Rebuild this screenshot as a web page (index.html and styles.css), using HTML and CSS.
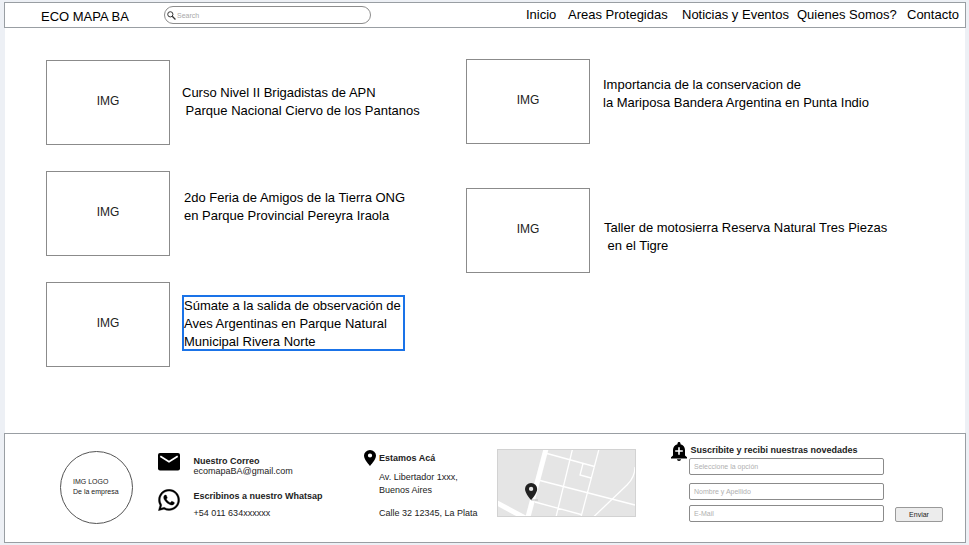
FILE: index.html
```html
<!DOCTYPE html>
<html lang="es">
<head>
<meta charset="utf-8">
<title>Eco Mapa BA</title>
<link rel="stylesheet" href="styles.css">
</head>
<body>
<div class="page">
  <header class="topbar">
    <div class="brand">ECO MAPA BA</div>
    <div class="search">
      <svg width="9" height="9" viewBox="0 0 10 10"><circle cx="3.7" cy="3.7" r="2.9" fill="none" stroke="#333" stroke-width="1.1"/><path d="M5.8 5.8 9.400 9.400" stroke="#333" stroke-width="1.4"/></svg>
      <span>Search</span>
    </div>
    <nav class="nav">
      <a>Inicio</a><a>Areas Protegidas</a><a>Noticias y Eventos</a><a>Quienes Somos?</a><a>Contacto</a>
    </nav>
  </header>

  <main class="news">
    <section class="column">
      <article class="card"><div class="thumb">IMG</div><p class="title t1">Curso Nivel II Brigadistas de APN<br>&nbsp;Parque Nacional Ciervo de los Pantanos</p></article>
      <article class="card"><div class="thumb">IMG</div><p class="title t2">2do Feria de Amigos de la Tierra ONG<br>en Parque Provincial Pereyra Iraola</p></article>
      <article class="card"><div class="thumb">IMG</div><p class="title selected">Súmate a la salida de observación de<br>Aves Argentinas en Parque Natural<br>Municipal Rivera Norte</p></article>
    </section>
    <section class="column right">
      <article class="card"><div class="thumb">IMG</div><p class="title t4">Importancia de la conservacion de<br>la Mariposa Bandera Argentina en Punta Indio</p></article>
      <article class="card"><div class="thumb">IMG</div><p class="title t5">Taller de motosierra Reserva Natural Tres Piezas<br>&nbsp;en el Tigre</p></article>
    </section>
  </main>

  <footer class="footer">
    <div class="logo"><span>IMG LOGO<br>De la empresa</span></div>
    <div class="contact">
      <svg class="mail" width="22" height="18" viewBox="0 0 22 18"><rect width="22" height="17.5" rx="2" fill="#000"/><path d="M2.3 3.2 11 8.7l8.700-5.500" fill="none" stroke="#fff" stroke-width="1.800"/></svg>
      <div class="mail-text"><b>Nuestro Correo</b><br>ecomapaBA@gmail.com</div>
      <svg class="wa" width="22" height="22" viewBox="1.700 1.700 20.600 20.600"><path d="M19.050 4.910A9.820 9.820 0 0 0 12.040 2C6.580 2 2.130 6.450 2.130 11.910c0 1.750.460 3.450 1.320 4.950L2.050 22l5.250-1.380c1.450.790 3.080 1.210 4.740 1.210 5.460 0 9.910-4.450 9.910-9.910 0-2.650-1.030-5.140-2.900-7.010zm-7.010 15.240c-1.480 0-2.930-.400-4.200-1.150l-.300-.180-3.120.820.830-3.040-.200-.310a8.260 8.260 0 0 1-1.260-4.380c0-4.540 3.700-8.240 8.240-8.240 4.540 0 8.230 3.700 8.230 8.240 0 4.540-3.680 8.240-8.220 8.240zm4.520-6.160c-.250-.120-1.470-.720-1.690-.810-.230-.080-.390-.120-.560.120-.170.250-.640.810-.780.970-.140.170-.290.190-.540.060-.250-.120-1.050-.390-1.990-1.230-.740-.660-1.230-1.470-1.380-1.720-.140-.250-.020-.380.110-.510.110-.110.250-.290.370-.430s.170-.250.250-.410c.080-.170.040-.310-.020-.430s-.560-1.340-.760-1.840c-.200-.480-.410-.420-.560-.430h-.480c-.170 0-.430.060-.660.310-.220.250-.860.850-.860 2.070 0 1.220.890 2.400 1.010 2.560.120.170 1.750 2.670 4.230 3.740 2.480 1.070 2.480.710 2.930.670.450-.040 1.470-.600 1.670-1.180.210-.580.210-1.070.140-1.180s-.220-.160-.470-.280z" fill="#000" stroke="#000" stroke-width=".3"/></svg>
      <div class="wa-text"><b>Escribinos a nuestro Whatsap</b><br>+54 011 634xxxxxx</div>
    </div>
    <div class="place">
      <svg width="12" height="16" viewBox="0 0 14 20" preserveAspectRatio="none"><path d="M7 0a7 7 0 0 0-7 7c0 5.250 7 13 7 13s7-7.750 7-13a7 7 0 0 0-7-7zm0 9.500a2.500 2.500 0 1 1 0-5 2.500 2.500 0 0 1 0 5z"/></svg>
      <div class="address"><b>Estamos Acá</b><p>Av. Libertador 1xxx,<br>Buenos Aires</p><p class="second">Calle 32 12345, La Plata</p></div>
    </div>
    <svg class="map" width="139" height="68" viewBox="0 0 139 68">
      <rect width="139" height="68" fill="#e5e5e5"/>
      <g fill="none" stroke="#fff" stroke-width="1.300"><path d="M50 4.500 97.500 17.500M43 31.500 138 56M38 53 84 65.500M75.500 0 59 68M102 0 84 68M86 14.500 83 26 94 29M97 67.500 130 36Q138 28 138 18"/><path d="M49 0 31 68" stroke-width="5"/><path d="M0 54 30 70" stroke-width="5"/></g>
      <rect x=".5" y=".5" width="138" height="67" fill="none" stroke="#d2d2d2"/>
      <path d="M34 51h7" stroke="#bbb"/>
      <path transform="translate(28 34) scale(.87 .85)" fill="#222" d="M7 0a7 7 0 0 0-7 7c0 5.250 7 13 7 13s7-7.750 7-13a7 7 0 0 0-7-7zm0 9.500a2.500 2.500 0 1 1 0-5 2.500 2.500 0 0 1 0 5z"/>
    </svg>
    <form class="subscribe">
      <svg class="bell" width="16" height="19" viewBox="0 0 16 19"><path d="M8 0c.900 0 1.500.700 1.500 1.500v.700C12.200 2.900 14 5.100 14 8v5.500l2 1.800V16.500H0v-1.200l2-1.800V8c0-2.900 1.800-5.100 4.500-5.800v-.700C6.500.700 7.100 0 8 0zM6 17.300h4c0 1-.900 1.700-2 1.700s-2-.700-2-1.700z"/><path d="M4.200 9h7.600M8 5.200v7.600" stroke="#fff" stroke-width="1.600"/></svg>
      <div class="fields">
        <b>Suscribite y recibi nuestras novedades</b>
        <div class="field">Seleccione la opción</div>
        <div class="field name">Nombre y Apellido</div>
        <div class="field">E-Mail</div>
      </div>
      <div class="send">Enviar</div>
    </form>
  </footer>
</div>
</body>
</html>
```
FILE: styles.css
```css
* { box-sizing: border-box; }
body { margin: 0; height: 545px; overflow: hidden; background: #edf0f5; font-family: "Liberation Sans", Arial, sans-serif; color: #000; }
p { margin: 0; }
.page { width: 962px; height: 541px; margin: 2px 0 0 4px; display: flex; flex-direction: column; }
.topbar { height: 26px; flex: none; display: flex; background: #fff; border: 1px solid #999ea3; font-size: 13px; line-height: 15px; white-space: nowrap; }
.brand { width: 122px; margin-left: 36px; padding-top: 6px; }
.search { width: 207px; height: 18px; margin: 3px 0 0 1px; border: 1px solid #8c8c8c; border-radius: 9px; display: flex; align-items: center; padding-left: 2px; gap: 1px; font-size: 7px; color: #a8a8a8; }
.nav { display: grid; grid-template-columns: 42px 114px 115px 110px 54px; margin-left: 155px; padding-top: 4px; }
.news { flex: none; height: 405px; margin: 0 1px; background: #fff; display: grid; grid-template-columns: 420px 1fr; padding: 32px 0 0 41px; }
.column { display: flex; flex-direction: column; gap: 26px; }
.column.right { gap: 44px; margin-top: -1px; }
.card { display: flex; height: 85px; }
.thumb { width: 124px; height: 85px; flex: none; border: 1px solid #8b8b8b; display: grid; place-items: center; font-size: 12px; color: #222; padding-bottom: 3px; }
.title { font-size: 13px; line-height: 18px; white-space: nowrap; }
.t1 { margin: 24px 0 0 12px; }
.t2 { margin: 18px 0 0 14px; }
.selected { width: 223px; height: 56px; margin: 13px 0 0 12px; border: 2px solid #1a73e8; }
.t4 { margin: 17px 0 0 13px; }
.t5 { margin: 31px 0 0 14px; }
.footer { height: 110px; flex: none; display: flex; background: #fff; border: 1px solid #999ea3; font-size: 9px; line-height: 10px; color: #222; white-space: nowrap; }
.logo { width: 73px; height: 73px; margin: 17px 0 0 55px; border: 1px solid #555; border-radius: 50%; padding: 25px 0 0 12px; font-size: 7px; }
.contact { width: 206px; margin-left: 25px; padding-top: 19px; display: grid; grid-template: 35px 45px / 36px 1fr; }
.mail-text { padding-top: 3px; margin-left: -.5px; }
.wa { margin-top: 1px; }
.wa-text { line-height: 17px; margin-left: -.5px; }
.place { display: flex; width: 133px; gap: 3px; padding-top: 16px; }
.address { padding-top: 3px; }
.address p { line-height: 13px; margin-top: 8px; }
.address .second { margin-top: 10px; }
.map { margin-top: 15px; flex: none; }
.subscribe { display: flex; margin: 0 0 0 35px; padding-top: 8px; }
.fields { width: 195px; margin-left: 2px; padding-top: 3px; }
.fields b { display: block; padding-left: 1.5px; margin-bottom: 3px; }
.field { height: 17px; border: 1px solid #8b8b8b; border-radius: 2px; padding-left: 4px; font-size: 7px; line-height: 15px; color: #b0b0b0; }
.field.name { margin: 8px 0 5px; }
.send { width: 48px; height: 15px; margin: 65px 0 0 11px; border: 1px solid #999; border-radius: 2px; background: #ececec; text-align: center; font-size: 7px; line-height: 13px; }
```
